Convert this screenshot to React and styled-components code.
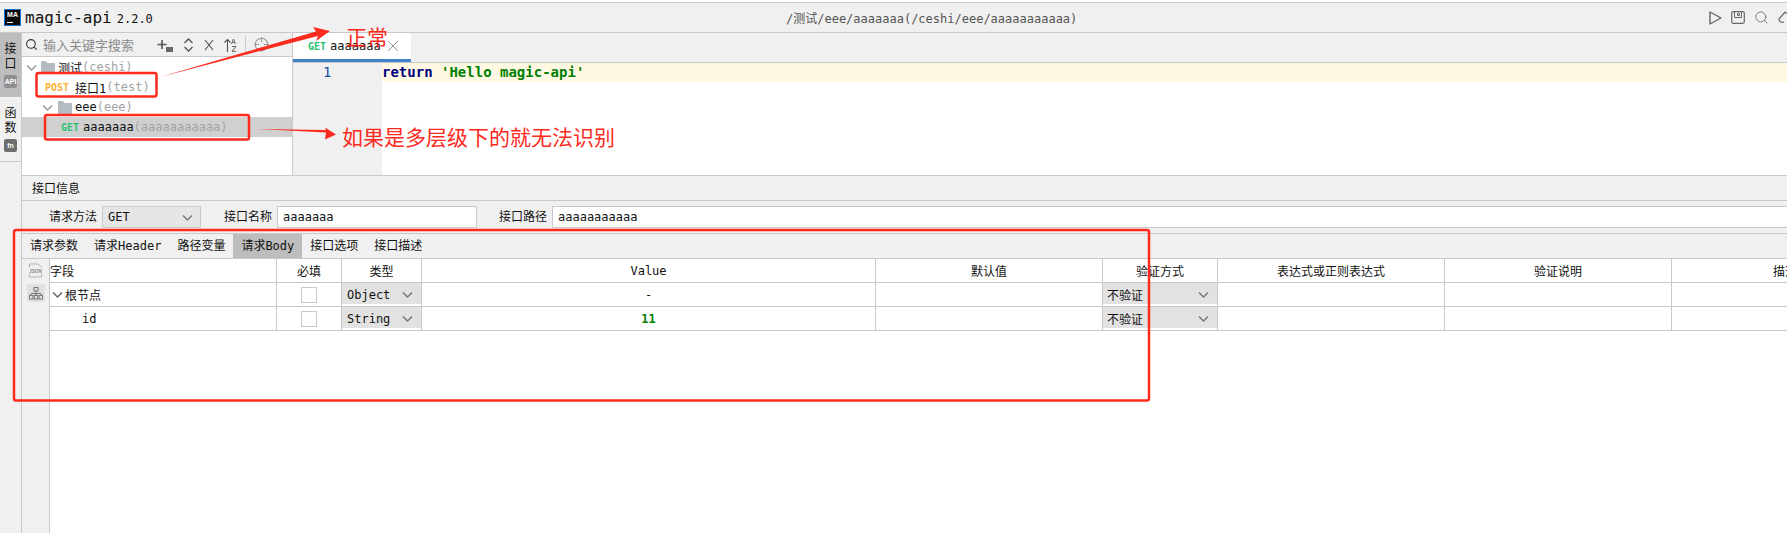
import React from 'react';
import styled, { createGlobalStyle } from 'styled-components';
import { Search, X } from 'lucide-react';

const GlobalStyle = createGlobalStyle`
  html, body {
    margin: 0;
    padding: 0;
    background: #fff;
  }
  * {
    box-sizing: border-box;
  }
`;

const LINE = '#c9c9c9';
const PANEL = '#f0f0f0';
const RED = '#fd2a1e';

const Page = styled.div`
  position: relative;
  width: 100vw;
  height: 100vh;
  overflow: hidden;
  padding-top: 2px;
  background: #fff;
  color: #111;
  font-family: "DejaVu Sans Mono", "Noto Sans CJK SC", monospace;
  font-size: 12px;
  display: flex;
  flex-direction: column;
`;

const TitleBar = styled.div`
  height: 31px;
  flex: none;
  border-top: 1px solid ${LINE};
  border-bottom: 1px solid ${LINE};
  background: ${PANEL};
  display: flex;
  align-items: center;
  padding-left: 5px;
  position: relative;
`;

const Logo = styled.div`
  width: 15px;
  height: 15px;
  background: #0a0a0a;
  outline: 1px solid #1273d6;
  color: #fff;
  font: bold 7px/10px "Liberation Sans", sans-serif;
  text-align: center;
  position: relative;
  &::after {
    content: '';
    position: absolute;
    left: 2px;
    bottom: 2px;
    width: 6px;
    height: 1px;
    background: #fff;
  }
`;

const AppName = styled.span`
  font-size: 16px;
  margin-left: 5px;
`;

const Version = styled.span`
  margin-left: 5px;
  margin-top: 2px;
`;

const PathText = styled.div`
  position: absolute;
  left: 786px;
  top: 6px;
  color: #555;
  white-space: nowrap;
  font-size: 12px;
`;

const TitleActions = styled.div`
  position: absolute;
  left: 1709px;
  top: 7px;
  display: flex;
  gap: 9px;
  align-items: center;
  color: #666;
`;

const Body = styled.div`
  flex: 1;
  display: flex;
  min-height: 0;
`;

const Rail = styled.div`
  width: 22px;
  flex: none;
  background: ${PANEL};
  border-right: 1px solid ${LINE};
`;

const RailTab = styled.div`
  height: ${p => (p.$active ? 64 : 65)}px;
  background: ${p => (p.$active ? '#bdbdbd' : 'transparent')};
  border-bottom: ${p => (p.$active ? 'none' : `1px solid ${LINE}`)};
  display: flex;
  flex-direction: column;
  align-items: center;
  padding-top: 9px;
  font-size: 12px;
  line-height: 15px;
`;

const RailBadge = styled.div`
  width: 13px;
  height: 13px;
  margin-top: 3px;
  border-radius: 2px;
  background: ${p => p.$color};
  color: #fff;
  font: bold 7px/13px "Liberation Sans", sans-serif;
  text-align: center;
`;

const Main = styled.div`
  flex: 1;
  min-width: 0;
  display: flex;
  flex-direction: column;
`;

const TopPane = styled.div`
  height: 143px;
  flex: none;
  display: flex;
  border-bottom: 1px solid ${LINE};
`;

const TreePane = styled.div`
  width: 271px;
  flex: none;
  border-right: 1px solid ${LINE};
  background: #fff;
`;

const TreeTools = styled.div`
  height: 24px;
  background: ${PANEL};
  border-bottom: 1px solid ${LINE};
  display: flex;
  align-items: center;
  padding-left: 3px;
  color: #444;
`;

const SearchHint = styled.span`
  margin-left: 5px;
  width: 114px;
  font-size: 13px;
  color: #8b8b8b;
`;

const ToolIcon = styled.svg`
  flex: none;
  margin-right: ${p => p.$gap || 0}px;
  color: #555;
`;

const ToolDivider = styled.div`
  width: 1px;
  height: 17px;
  background: ${LINE};
  margin-right: 8px;
`;

const TreeRow = styled.div`
  height: 20px;
  display: flex;
  align-items: center;
  padding-left: ${p => p.$indent}px;
  background: ${p => (p.$selected ? '#d0d0d0' : 'transparent')};
  white-space: nowrap;
`;

const Method = styled.span`
  font-size: 10px;
  font-weight: bold;
  color: ${p => p.$color};
  margin-right: ${p => p.$gap}px;
`;

const Muted = styled.span`
  color: #a3a3a3;
`;

const Editor = styled.div`
  flex: 1;
  min-width: 0;
  display: flex;
  flex-direction: column;
  background: #fff;
`;

const EditorTabs = styled.div`
  height: 30px;
  flex: none;
  background: ${PANEL};
  border-bottom: 1px solid ${LINE};
`;

const EditorTab = styled.div`
  width: 118px;
  height: 29px;
  background: #fff;
  border-bottom: 3px solid #4083c9;
  display: flex;
  align-items: center;
  padding-left: 15px;
`;

const CodeArea = styled.div`
  flex: 1;
  display: flex;
`;

const Gutter = styled.div`
  width: 89px;
  flex: none;
  background: ${PANEL};
  color: #1a4f9c;
  padding-left: 30px;
  line-height: 19px;
  font-size: 14px;
`;

const CodeLines = styled.div`
  flex: 1;
`;

const CodeLine = styled.div`
  height: 19px;
  background: #fff9e3;
  line-height: 19px;
  font-size: 14px;
  font-weight: bold;
  white-space: pre;
`;

const Keyword = styled.span`
  color: #000080;
`;

const StringLit = styled.span`
  color: #008000;
`;

const InfoTitle = styled.div`
  height: 25px;
  flex: none;
  background: ${PANEL};
  border-bottom: 1px solid ${LINE};
  padding-left: 10px;
  line-height: 26px;
`;

const FormRow = styled.div`
  height: 33px;
  flex: none;
  background: ${PANEL};
  padding-top: 5px;
  display: flex;
  align-items: flex-start;
  border-bottom: 1px solid ${LINE};
  position: relative;
`;

const FormLabel = styled.label`
  width: ${p => p.$width}px;
  flex: none;
  height: 22px;
  line-height: 23px;
  text-align: right;
  padding-right: 5px;
`;

const FormSelect = styled.div`
  width: 99px;
  height: 22px;
  flex: none;
  background: #e6e6e6;
  border: 1px solid ${LINE};
  display: flex;
  align-items: center;
  justify-content: space-between;
  padding: 0 7px 0 5px;
`;

const FormInput = styled.div`
  width: ${p => (p.$wide ? '1400px' : '200px')};
  height: 22px;
  flex: none;
  background: #fff;
  border: 1px solid ${LINE};
  padding-left: 5px;
  line-height: 21px;
`;

const TabStrip = styled.div`
  height: 25px;
  flex: none;
  background: ${PANEL};
  border-bottom: 1px solid ${LINE};
  display: flex;
`;

const BodyTab = styled.div`
  padding: 0 8px;
  line-height: 25px;
  background: ${p => (p.$active ? '#bdbdbd' : 'transparent')};
`;

const TableArea = styled.div`
  flex: 1;
  display: flex;
  min-height: 0;
`;

const TableTools = styled.div`
  width: 28px;
  flex: none;
  background: ${PANEL};
  border-right: 1px solid ${LINE};
  display: flex;
  flex-direction: column;
  align-items: center;
  padding-top: 4px;
  gap: 6px;
`;

const ToolButton = styled.div`
  width: 18px;
  height: 18px;
  border-radius: 2px;
  display: flex;
  align-items: center;
  justify-content: center;
  background: ${p => (p.$active ? '#e0e0e0' : 'transparent')};
`;

const Grid = styled.div`
  width: 1849px;
  flex: none;
  display: grid;
  grid-template-columns: 227px 65px 80px 454px 227px 115px 227px 227px 227px;
  grid-auto-rows: 24px;
`;

const Cell = styled.div`
  border-right: 1px solid ${LINE};
  border-bottom: 1px solid ${LINE};
  display: flex;
  align-items: center;
  justify-content: ${p => (p.$left ? 'flex-start' : 'center')};
  padding-left: ${p => p.$pad || 0}px;
  white-space: nowrap;
  overflow: hidden;
`;

const SelectCell = styled(Cell)`
  background: #e2e2e2;
  justify-content: space-between;
  padding: 0 8px 0 ${p => p.$pad || 5}px;
  box-shadow: inset 0 -2px 0 #fff;
`;

const CheckBox = styled.div`
  width: 16px;
  height: 16px;
  border: 1px solid ${LINE};
  background: #fff;
`;

const ValueNumber = styled.span`
  color: #008000;
  font-weight: bold;
`;

const Overlay = styled.svg`
  position: absolute;
  left: 0;
  top: 0;
  pointer-events: none;
`;

const Note = styled.div`
  position: absolute;
  left: ${p => p.$x}px;
  top: ${p => p.$y}px;
  color: ${RED};
  font-family: "Noto Sans CJK SC", sans-serif;
  font-size: 21px;
  line-height: 26px;
  white-space: nowrap;
`;

const Chevron = ({ size = 11, color = '#777', ...rest }) => (
  <ToolIcon width={size} height={size} viewBox="0 0 11 11" fill="none" {...rest}>
    <path d="M1 3.5 L5.5 8 L10 3.5" stroke={color} strokeWidth="1.5" />
  </ToolIcon>
);

const Folder = ({ gap = 3 }) => (
  <ToolIcon $gap={gap} width="14" height="13" viewBox="0 0 14 13">
    <path d="M0 0 H5 L6.5 2 H14 V13 H0 Z" fill="#b4bcc2" />
  </ToolIcon>
);

const PlusFolder = () => (
  <ToolIcon $gap={10} width="16" height="14" viewBox="0 0 16 14" fill="none">
    <path d="M5 2 V11 M0.5 6.5 H9.5" stroke="#555" strokeWidth="1.6" />
    <rect x="9" y="9" width="7" height="5" fill="#666" />
  </ToolIcon>
);

const UpDown = () => (
  <ToolIcon $gap={10} width="11" height="14" viewBox="0 0 11 14" fill="none">
    <path d="M1.5 5 L5.5 1 L9.5 5 M1.5 9 L5.5 13 L9.5 9" stroke="#555" strokeWidth="1.3" />
  </ToolIcon>
);

const Cross = () => (
  <ToolIcon $gap={10} width="10" height="14" viewBox="0 0 10 14" fill="none">
    <path d="M1 2 L9 12 M9 2 L1 12" stroke="#555" strokeWidth="1.2" />
  </ToolIcon>
);

const SortAz = () => (
  <ToolIcon $gap={8} width="13" height="14" viewBox="0 0 13 14" fill="none">
    <path d="M3.5 14 V1.5 M0.5 4.5 L3.5 1.5 L6.5 4.5" stroke="#555" strokeWidth="1.1" />
    <path d="M7.5 6 L9.5 1 L11.5 6 M8.3 4.3 H10.7 M8 8.5 H12 L8 13.3 H12" stroke="#666" strokeWidth="1" />
  </ToolIcon>
);

const Target = () => (
  <ToolIcon width="15" height="15" viewBox="0 0 15 15" fill="none">
    <circle cx="7.5" cy="7.5" r="6.3" stroke="#999" strokeWidth="1.1" />
    <path d="M7.5 0 V5 M7.5 10 V15 M0 7.5 H5 M10 7.5 H15" stroke="#999" strokeWidth="1" />
  </ToolIcon>
);

const Play = () => (
  <ToolIcon width="13" height="14" viewBox="0 0 13 14" fill="none">
    <path d="M1 1 L12 7 L1 13 Z" stroke="#666" strokeWidth="1.4" strokeLinejoin="round" />
  </ToolIcon>
);

const Save = () => (
  <ToolIcon width="14" height="13" viewBox="0 0 14 13" fill="none">
    <rect x="0.7" y="0.7" width="12.6" height="11.6" rx="1.5" stroke="#666" strokeWidth="1.2" />
    <path d="M3.5 1 V6.5 H10.5 V1 M6.5 2.5 H8.5 V4.5 H6.5 Z" stroke="#666" strokeWidth="1" />
  </ToolIcon>
);

const Skin = () => (
  <ToolIcon width="14" height="13" viewBox="0 0 14 13" fill="none">
    <path d="M1 8 L7 1 L12 5 M1 8 C1 11 4 12 6 11" stroke="#666" strokeWidth="1.2" />
  </ToolIcon>
);

const JsonIcon = () => (
  <svg width="15" height="15" viewBox="0 0 15 15" fill="none">
    <path d="M1.5 4.5 V1 H10 L13.5 4 V4.5 M1.5 11 V14 H13.5 V11" stroke="#aaa" strokeWidth="0.9" />
    <text x="7.5" y="9.8" textAnchor="middle" fontSize="4.6" fontWeight="bold" fontFamily="Liberation Sans" fill="#888">JSON</text>
  </svg>
);

const TreeIcon = () => (
  <svg width="14" height="13" viewBox="0 0 14 13" fill="none" stroke="#777" strokeWidth="1">
    <rect x="5" y="0.5" width="4" height="3.5" />
    <path d="M7 4 V6.5 M2 8.5 V6.5 H12 V8.5 M7 6.5 V8.5" />
    <rect x="0.5" y="8.5" width="3.5" height="3.5" />
    <rect x="5.2" y="8.5" width="3.5" height="3.5" />
    <rect x="10" y="8.5" width="3.5" height="3.5" />
  </svg>
);

const bodyTabs = ['请求参数', '请求Header', '路径变量', '请求Body', '接口选项', '接口描述'];

const TreePanel = () => (
  <TreePane>
    <TreeTools>
      <Search size={13} strokeWidth={2} color="#333" />
      <SearchHint>输入关键字搜索</SearchHint>
      <PlusFolder />
      <UpDown />
      <Cross />
      <SortAz />
      <ToolDivider />
      <Target />
    </TreeTools>
    <TreeRow $indent={4}>
      <Chevron style={{ marginRight: 4 }} color="#999" />
      <Folder />
      测试<Muted>(ceshi)</Muted>
    </TreeRow>
    <TreeRow $indent={23}>
      <Method $color="#ffb02e" $gap={6}>POST</Method>
      接口1<Muted>(test)</Muted>
    </TreeRow>
    <TreeRow $indent={20}>
      <Chevron style={{ marginRight: 5 }} color="#999" />
      <Folder />
      eee<Muted>(eee)</Muted>
    </TreeRow>
    <TreeRow $indent={39} $selected>
      <Method $color="#27c26c" $gap={4}>GET</Method>
      aaaaaaa<Muted>(aaaaaaaaaaa)</Muted>
    </TreeRow>
  </TreePane>
);

const EditorPanel = () => (
  <Editor>
    <EditorTabs>
      <EditorTab>
        <Method $color="#27c26c" $gap={4}>GET</Method>
        aaaaaaa
        <X size={18} strokeWidth={0.9} color="#555" style={{ marginLeft: 3 }} />
      </EditorTab>
    </EditorTabs>
    <CodeArea>
      <Gutter>1</Gutter>
      <CodeLines>
        <CodeLine>
          <Keyword>return</Keyword> <StringLit>'Hello magic-api'</StringLit>
        </CodeLine>
      </CodeLines>
    </CodeArea>
  </Editor>
);

const FieldTable = () => (
  <Grid>
    <Cell $left>字段</Cell>
    <Cell>必填</Cell>
    <Cell>类型</Cell>
    <Cell>Value</Cell>
    <Cell>默认值</Cell>
    <Cell>验证方式</Cell>
    <Cell>表达式或正则表达式</Cell>
    <Cell>验证说明</Cell>
    <Cell>描述</Cell>

    <Cell $left $pad={2}>
      <Chevron size={11} color="#666" style={{ marginRight: 2 }} />
      根节点
    </Cell>
    <Cell><CheckBox /></Cell>
    <SelectCell>Object<Chevron /></SelectCell>
    <Cell>-</Cell>
    <Cell />
    <SelectCell $pad={4}>不验证<Chevron /></SelectCell>
    <Cell />
    <Cell />
    <Cell />

    <Cell $left $pad={32}>id</Cell>
    <Cell><CheckBox /></Cell>
    <SelectCell>String<Chevron /></SelectCell>
    <Cell><ValueNumber>11</ValueNumber></Cell>
    <Cell />
    <SelectCell $pad={4}>不验证<Chevron /></SelectCell>
    <Cell />
    <Cell />
    <Cell />
  </Grid>
);

const Annotations = () => (
  <Overlay width="1787" height="533" viewBox="0 0 1787 533" fill="none">
    <g stroke={RED} strokeWidth="2.5">
      <rect x="36.5" y="73" width="120" height="23.5" rx="2" />
      <rect x="45" y="115" width="204" height="24.5" rx="2" />
      <rect x="14" y="230" width="1135" height="170.5" rx="2" />
    </g>
    <g fill={RED}>
      <path d="M160 77 L318 36 L316 41 L330 31 L313 27 L316 31.5 Z" />
      <path d="M257 129 L326 132.5 L325 139.5 L336 134.5 L325 127.5 L326 130 Z" />
    </g>
  </Overlay>
);

export default function App() {
  return (
    <Page>
      <GlobalStyle />
      <TitleBar>
        <Logo>MA</Logo>
        <AppName>magic-api</AppName>
        <Version>2.2.0</Version>
        <PathText>/测试/eee/aaaaaaa(/ceshi/eee/aaaaaaaaaaa)</PathText>
        <TitleActions>
          <Play />
          <Save />
          <Search size={15} strokeWidth={1.3} />
          <Skin />
        </TitleActions>
      </TitleBar>
      <Body>
        <Rail>
          <RailTab $active>
            接<br />口
            <RailBadge $color="#8f8f8f">API</RailBadge>
          </RailTab>
          <RailTab>
            函<br />数
            <RailBadge $color="#6f6f6f">fn</RailBadge>
          </RailTab>
        </Rail>
        <Main>
          <TopPane>
            <TreePanel />
            <EditorPanel />
          </TopPane>
          <InfoTitle>接口信息</InfoTitle>
          <FormRow>
            <FormLabel $width={80}>请求方法</FormLabel>
            <FormSelect>GET<Chevron /></FormSelect>
            <FormLabel $width={76}>接口名称</FormLabel>
            <FormInput>aaaaaaa</FormInput>
            <FormLabel $width={75}>接口路径</FormLabel>
            <FormInput $wide>aaaaaaaaaaa</FormInput>
          </FormRow>
          <TabStrip>
            {bodyTabs.map(t => (
              <BodyTab key={t} $active={t === '请求Body'}>{t}</BodyTab>
            ))}
          </TabStrip>
          <TableArea>
            <TableTools>
              <JsonIcon />
              <ToolButton $active><TreeIcon /></ToolButton>
            </TableTools>
            <FieldTable />
          </TableArea>
        </Main>
      </Body>
      <Annotations />
      <Note $x={346} $y={23}>正常</Note>
      <Note $x={342} $y={123}>如果是多层级下的就无法识别</Note>
    </Page>
  );
}
